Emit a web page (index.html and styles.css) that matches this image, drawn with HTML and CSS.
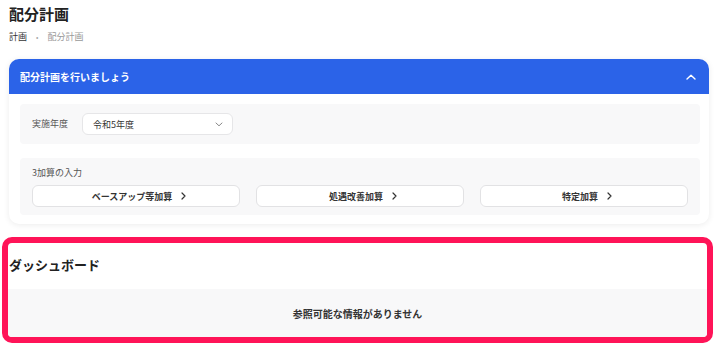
FILE: index.html
```html
<!DOCTYPE html>
<html lang="ja">
<head>
<meta charset="utf-8">
<link rel="stylesheet" href="styles.css">
</head>
<body>
<div class="page">
  <header class="page-head">
    <h1 class="page-title">配分計画</h1>
    <nav class="crumbs">
      <span class="crumb crumb-root">計画</span>
      <span class="crumb-dot">•</span>
      <span class="crumb crumb-current">配分計画</span>
    </nav>
  </header>

  <section class="card">
    <div class="card-head">
      <span class="card-title">配分計画を行いましょう</span>
      <svg class="icon-up" width="10" height="6" viewBox="0 0 10 6"><path d="M1 5 L5 1.2 L9 5" fill="none" stroke="#fff" stroke-width="1.4" stroke-linecap="round" stroke-linejoin="round"/></svg>
    </div>
    <div class="card-body">
      <div class="panel panel-year">
        <span class="field-label">実施年度</span>
        <div class="select">
          <span class="select-value">令和5年度</span>
          <svg class="icon-down" width="8" height="5" viewBox="0 0 8 5"><path d="M1 1 L4 3.8 L7 1" fill="none" stroke="#888" stroke-width="1" stroke-linecap="round" stroke-linejoin="round"/></svg>
        </div>
      </div>
      <div class="panel panel-add">
        <div class="field-label">3加算の入力</div>
        <div class="btn-row">
          <button class="btn"><span>ベースアップ等加算</span><svg class="icon-right" width="5" height="8" viewBox="0 0 5 8"><path d="M1 1 L4 4 L1 7" fill="none" stroke="#333" stroke-width="1.2" stroke-linecap="round" stroke-linejoin="round"/></svg></button>
          <button class="btn"><span>処遇改善加算</span><svg class="icon-right" width="5" height="8" viewBox="0 0 5 8"><path d="M1 1 L4 4 L1 7" fill="none" stroke="#333" stroke-width="1.2" stroke-linecap="round" stroke-linejoin="round"/></svg></button>
          <button class="btn"><span>特定加算</span><svg class="icon-right" width="5" height="8" viewBox="0 0 5 8"><path d="M1 1 L4 4 L1 7" fill="none" stroke="#333" stroke-width="1.2" stroke-linecap="round" stroke-linejoin="round"/></svg></button>
        </div>
      </div>
    </div>
  </section>

  <section class="dashboard">
    <h2 class="dash-title">ダッシュボード</h2>
    <div class="dash-empty">参照可能な情報がありません</div>
  </section>
</div>
</body>
</html>
```

FILE: styles.css
```css
* { box-sizing: border-box; }

html, body {
  margin: 0;
  padding: 0;
  background: #ffffff;
  font-family: "Noto Sans CJK JP", "Noto Sans", sans-serif;
  color: #222;
}

.page {
  padding: 3px 7px 0 9px;
}

.page-title {
  margin: 0;
  font-size: 15px;
  line-height: 22px;
  font-weight: 700;
  color: #222;
}

.crumbs {
  margin-top: 5px;
  display: flex;
  align-items: center;
  gap: 9px;
  font-size: 9px;
  line-height: 14px;
}

.crumb-root { color: #333; }
.crumb-dot { color: #aaa; font-size: 7px; }
.crumb-current { color: #999; }

.card {
  margin-top: 15px;
  border-radius: 10px;
  background: #fff;
  box-shadow: 0 1px 6px rgba(0, 0, 0, 0.08);
  overflow: hidden;
}

.card-head {
  height: 35px;
  background: #2b63e8;
  display: flex;
  align-items: center;
  justify-content: space-between;
  padding: 0 13px 0 11px;
}

.card-title {
  color: #fff;
  font-size: 10px;
  font-weight: 700;
}

.icon-up { display: block; }

.card-body {
  padding: 10px 9px 9px 11px;
  display: flex;
  flex-direction: column;
  gap: 14px;
}

.panel {
  background: #f8f8f9;
  border-radius: 4px;
}

.panel-year {
  height: 40px;
  display: flex;
  align-items: center;
  padding: 0 12px;
  gap: 14px;
}

.field-label {
  font-size: 9px;
  line-height: 12px;
  color: #555;
}

.panel-year .field-label { width: 36px; }

.select {
  width: 151px;
  height: 22px;
  background: #fff;
  border: 1px solid #e6e6e8;
  border-radius: 6px;
  display: flex;
  align-items: center;
  justify-content: space-between;
  padding: 0 9px 0 10px;
}

.select-value {
  font-size: 9px;
  color: #333;
}

.icon-down { display: block; }

.panel-add {
  padding: 9px 12px 8px 12px;
}

.btn-row {
  margin-top: 6px;
  display: grid;
  grid-template-columns: 1fr 1fr 1fr;
  gap: 16px;
}

.btn {
  height: 22px;
  background: #fff;
  border: 1px solid #e2e2e4;
  border-radius: 6px;
  display: flex;
  align-items: center;
  justify-content: center;
  gap: 9px;
  font-family: inherit;
  font-size: 9px;
  font-weight: 700;
  color: #333;
  padding: 0 0 0 6px;
}

.icon-right { display: block; }

.dashboard {
  margin: 13px -4px 0 -7px;
  border: 6px solid #ff1458;
  border-radius: 10px;
  overflow: hidden;
  background: #fff;
}

.dash-title {
  margin: 0;
  padding: 12px 0 0 1px;
  font-size: 13px;
  line-height: 20px;
  font-weight: 700;
  color: #222;
}

.dash-empty {
  margin-top: 14px;
  height: 48px;
  background: #f8f8f9;
  display: flex;
  align-items: center;
  justify-content: center;
  font-size: 10px;
  font-weight: 700;
  color: #333;
}
```
